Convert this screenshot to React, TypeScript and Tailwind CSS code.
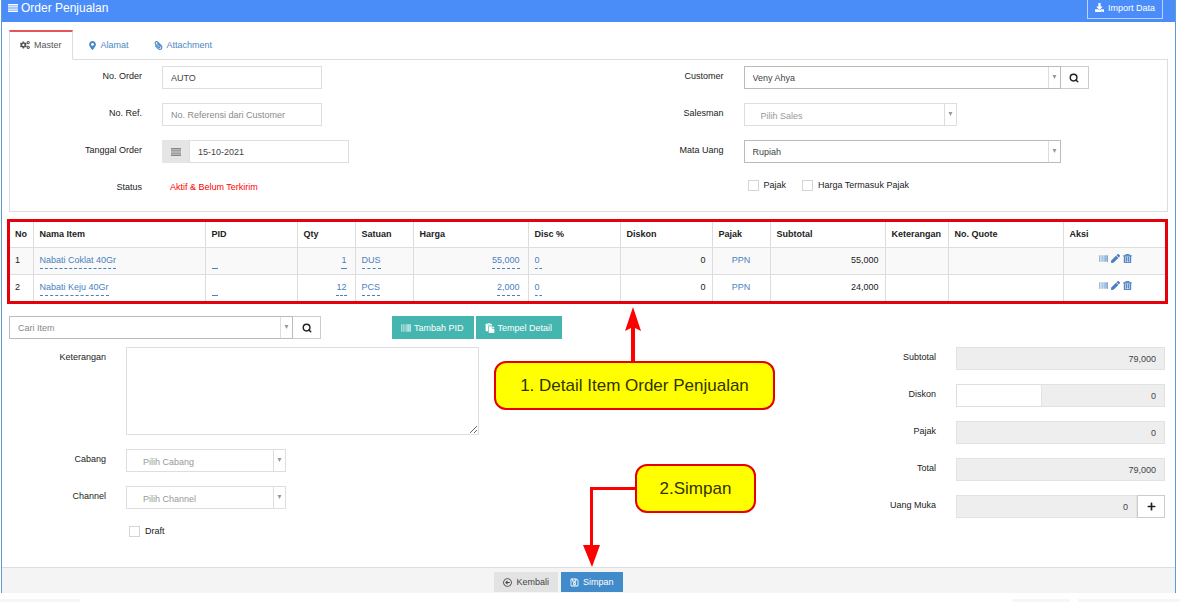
import type { ReactNode } from "react";
import { Search } from "lucide-react";
import {
  FaBarcode,
  FaCogs,
  FaDownload,
  FaMapMarkerAlt,
  FaPaperclip,
  FaPaste,
  FaPen,
  FaPlus,
  FaRegArrowAltCircleLeft,
  FaRegSave,
  FaRegTrashAlt,
} from "react-icons/fa";

const fieldClass = "h-[23px] border border-[#dedede] bg-white px-2 text-[#444] placeholder:text-[#8a8a8a]";
const totalClass = "h-[23px] min-w-0 flex-1 border border-[#e2e2e2] bg-[#eeeeee] px-2 text-right text-[#444]";
const tealButton = "flex h-[23px] items-center gap-[3px] bg-[#45b6af] pr-2.5 pl-[9px] text-white";
const iconButton = "flex h-[23px] w-7 shrink-0 items-center justify-center border border-[#ccc] bg-white text-[#222]";
const editLink = "inline-block border-b border-dashed border-[#4a7fc0] leading-4 text-[#4a7fc0]";
const cell = "border-l border-[#ddd] px-1.5 align-top first:border-l-0";
const bodyCell = `${cell} pt-1`;
const editNumber = "border-l border-[#ddd] pt-1 pr-2 pl-1.5 text-right align-top";

const columns = [
  { name: "No", width: "w-[24px]" },
  { name: "Nama Item", width: "w-[172px]" },
  { name: "PID", width: "w-[92px]" },
  { name: "Qty", width: "w-[58px]" },
  { name: "Satuan", width: "w-[58px]" },
  { name: "Harga", width: "w-[115px]" },
  { name: "Disc %", width: "w-[92px]" },
  { name: "Diskon", width: "w-[92px]" },
  { name: "Pajak", width: "w-[58px]" },
  { name: "Subtotal", width: "w-[115px]" },
  { name: "Keterangan", width: "w-[63px]" },
  { name: "No. Quote", width: "w-[115px]" },
  { name: "Aksi", width: "w-[105px]" },
];

const items = [
  { name: "Nabati Coklat 40Gr", qty: "1", unit: "DUS", price: "55,000", subtotal: "55,000" },
  { name: "Nabati Keju 40Gr", qty: "12", unit: "PCS", price: "2,000", subtotal: "24,000" },
];

function BarsIcon() {
  return (
    <svg viewBox="0 0 10 8" className="h-2 w-2.5 fill-current">
      <path d="M0 0h10v1.4H0zM0 2.2h10v1.4H0zM0 4.4h10v1.4H0zM0 6.6h10V8H0z" />
    </svg>
  );
}

type RowProps = { label: string; id: string; labelClass: string; children: ReactNode };

function Row({ label, id, labelClass, children }: RowProps) {
  return (
    <div className="flex items-start gap-5">
      <label htmlFor={id} className={`${labelClass} shrink-0 text-right leading-5 text-[#222]`}>
        {label}
      </label>
      {children}
    </div>
  );
}

type PickerProps = { id: string; value: string; className: string; tone: string; label?: string };

const filled = "border-[#bbb] pl-2 text-[#444]";
const empty = "border-[#dedede] pl-4 pt-0.5 text-[#999]";

function Picker({ id, value, className, tone, label }: PickerProps) {
  return (
    <div className={`relative ${className}`}>
      <select id={id} aria-label={label} className={`h-[23px] w-full appearance-none border bg-white pr-4 ${tone}`}>
        <option>{value}</option>
      </select>
      <span className="pointer-events-none absolute inset-y-px right-px flex w-3 justify-center border-l border-[#ddd] pt-2">
        <svg viewBox="0 0 5 4" className="h-1 w-[5px] fill-[#999]">
          <path d="M.5 0h4l-2 4z" />
        </svg>
      </span>
    </div>
  );
}

function Check({ label }: { label: string }) {
  return (
    <label className="flex items-center gap-[5px] text-[#222]">
      <input type="checkbox" className="size-[11px] appearance-none border border-[#d5d5d5] bg-white" />
      {label}
    </label>
  );
}

function MasterPanel() {
  return (
    <section className="grid grid-cols-2 border border-[#ddd] pt-1.5 pb-3.5">
      <div className="flex flex-col gap-3.5">
        <Row label="No. Order" id="order" labelClass="w-[132px]">
          <input id="order" defaultValue="AUTO" className={`${fieldClass} w-40`} />
        </Row>
        <Row label="No. Ref." id="ref" labelClass="w-[132px]">
          <input id="ref" placeholder="No. Referensi dari Customer" className={`${fieldClass} w-40`} />
        </Row>
        <Row label="Tanggal Order" id="date" labelClass="w-[132px]">
          <div className="flex">
            <span className="flex w-[27px] items-center justify-center bg-[#e5e5e5] text-[#888]">
              <BarsIcon />
            </span>
            <input id="date" defaultValue="15-10-2021" className={`${fieldClass} w-40`} />
          </div>
        </Row>
        <Row label="Status" id="status" labelClass="w-[132px]">
          <output id="status" className="px-2 leading-5 text-[#f00]">
            Aktif &amp; Belum Terkirim
          </output>
        </Row>
      </div>
      <div className="flex flex-col gap-3.5">
        <Row label="Customer" id="customer" labelClass="w-[135px]">
          <div className="flex">
            <Picker id="customer" value="Veny Ahya" className="w-[317px]" tone={filled} />
            <button type="button" aria-label="Cari customer" className={`${iconButton} border-l-0`}>
              <Search size={10} strokeWidth={3.5} />
            </button>
          </div>
        </Row>
        <Row label="Salesman" id="sales" labelClass="w-[135px]">
          <Picker id="sales" value="Pilih Sales" className="w-[213px]" tone={empty} />
        </Row>
        <Row label="Mata Uang" id="currency" labelClass="w-[135px]">
          <Picker id="currency" value="Rupiah" className="w-[317px]" tone={filled} />
        </Row>
        <div className="flex h-4 gap-4 pl-[159px]">
          <Check label="Pajak" />
          <Check label="Harga Termasuk Pajak" />
        </div>
      </div>
    </section>
  );
}

function ItemTable() {
  return (
    <div className="relative mt-[9px]">
      <table className="w-full table-fixed border-collapse border-t border-[#45b6af] text-left">
        <thead>
          <tr className="h-[26px] border-b border-[#ddd]">
            {columns.map((c) => (
              <th key={c.name} className={`${cell} ${c.width} pt-1 font-bold whitespace-nowrap text-[#222]`}>
                {c.name}
              </th>
            ))}
          </tr>
        </thead>
        <tbody className="text-[#222]">
          {items.map((item, i) => (
            <tr key={item.name} className="h-[27px] border-b border-[#ddd] odd:bg-[#f9f9f9]">
              <td className={bodyCell}>{i + 1}</td>
              <td className={bodyCell}>
                <a href="#item" className={editLink}>{item.name}</a>
              </td>
              <td className={bodyCell}>
                <a href="#pid" aria-label="PID" className={`${editLink} h-[17px] w-1.5`} />
              </td>
              <td className={editNumber}>
                <a href="#qty" className={editLink}>{item.qty}</a>
              </td>
              <td className={bodyCell}>
                <a href="#unit" className={editLink}>{item.unit}</a>
              </td>
              <td className={editNumber}>
                <a href="#price" className={editLink}>{item.price}</a>
              </td>
              <td className={bodyCell}>
                <a href="#disc" className={`${editLink} pr-0.5`}>0</a>
              </td>
              <td className={`${bodyCell} text-right`}>0</td>
              <td className={`${bodyCell} text-center`}>
                <a href="#tax" className="text-[#4a7fc0]">PPN</a>
              </td>
              <td className={`${bodyCell} text-right`}>{item.subtotal}</td>
              <td className={cell} />
              <td className={cell} />
              <td className={bodyCell}>
                <div className="flex justify-center gap-[3px] pt-0.5 text-[9px] text-[#4a7fc0]">
                  <button type="button" aria-label="PID"><FaBarcode /></button>
                  <button type="button" aria-label="Ubah"><FaPen /></button>
                  <button type="button" aria-label="Hapus"><FaRegTrashAlt className="stroke-current" strokeWidth={30} /></button>
                </div>
              </td>
            </tr>
          ))}
        </tbody>
      </table>
      <div className="pointer-events-none absolute -inset-y-0.5 right-0 -left-0.5 border-[3px] border-[#e6000c]" />
    </div>
  );
}

function Totals() {
  return (
    <div className="mr-[3px] flex w-[289px] flex-col gap-3.5">
      <Row label="Subtotal" id="subtotal" labelClass="w-[60px]">
        <input id="subtotal" readOnly value="79,000" className={totalClass} />
      </Row>
      <Row label="Diskon" id="discount" labelClass="w-[60px]">
        <div className="flex min-w-0 flex-1">
          <input id="discount" className={`${fieldClass} w-[85px] border-r-0`} />
          <input aria-label="Nilai diskon" readOnly value="0" className={totalClass} />
        </div>
      </Row>
      <Row label="Pajak" id="tax" labelClass="w-[60px]">
        <input id="tax" readOnly value="0" className={totalClass} />
      </Row>
      <Row label="Total" id="total" labelClass="w-[60px]">
        <input id="total" readOnly value="79,000" className={totalClass} />
      </Row>
      <Row label="Uang Muka" id="deposit" labelClass="w-[60px]">
        <div className="flex min-w-0 flex-1">
          <input id="deposit" readOnly value="0" className={totalClass} />
          <button type="button" aria-label="Tambah uang muka" className={iconButton}>
            <FaPlus />
          </button>
        </div>
      </Row>
    </div>
  );
}

// Tutorial callouts drawn over the form
function Callouts() {
  const box =
    "absolute flex h-[49px] items-center justify-center rounded-xl border-2 border-[#e60000] bg-[#ffff00] text-[17px] text-[#333300]";
  return (
    <div className="pointer-events-none">
      <svg className="absolute top-[306px] left-[624px] h-14 w-[18px] fill-[#f00]" viewBox="0 0 18 56">
        <path d="M9 1l8 24-6-3v34H7V22l-6 3z" />
      </svg>
      <div className={`${box} top-[361px] left-[494px] w-[281px]`}>1. Detail Item Order Penjualan</div>
      <svg className="absolute top-[486px] left-[583px] h-[82px] w-[54px] fill-[#f00]" viewBox="0 0 54 82">
        <path d="M54 1H7v58H0l9 22 8-22h-7V4h44z" />
      </svg>
      <div className={`${box} top-[464px] left-[635px] w-[121px]`}>2.Simpan</div>
    </div>
  );
}

export default function App() {
  return (
    <div className="relative min-h-screen bg-white font-['Liberation_Sans',Arial,sans-serif] text-[9px] leading-4">
      <main className="mr-1 ml-px border-x border-[#5b9bd1]">
        <header className="flex h-[22px] items-start justify-between bg-[#4b8df8] pr-3 pl-1.5 text-white">
          <h1 className="flex items-center gap-[3px] text-xs leading-4">
            <BarsIcon />
            Order Penjualan
          </h1>
          <button type="button" className="flex h-[19px] items-start gap-1 border border-t-0 border-[#b9d3fc] px-[7px]">
            <FaDownload className="mt-[3px]" />
            Import Data
          </button>
        </header>
        <div className="px-[7px] pt-2">
          <nav className="-mb-px flex text-[#4a88c4]">
            <a
              href="#master"
              className="flex h-[30px] items-center gap-1 border border-t-2 border-[#ddd] border-t-[#e5545a] border-b-white bg-white px-2.5 pb-0.5 text-[#555]"
            >
              <FaCogs className="text-[10px]" />
              Master
            </a>
            <a href="#alamat" className="flex items-center gap-1 px-[15px]">
              <FaMapMarkerAlt />
              Alamat
            </a>
            <a href="#attachment" className="flex items-center gap-1 px-2.5">
              <FaPaperclip className="-scale-x-100" />
              Attachment
            </a>
          </nav>
          <MasterPanel />
          <ItemTable />
          <div className="mt-3.5 flex">
            <Picker
              id="search"
              label="Cari Item"
              value="Cari Item"
              className="w-[284px]"
              tone="border-[#bbb] pl-2 text-[#888]"
            />
            <button type="button" aria-label="Cari item" className={`${iconButton} border-l-0`}>
              <Search size={10} strokeWidth={3.5} />
            </button>
            <div className="ml-[71px] flex gap-0.5">
              <button type="button" className={tealButton}>
                <FaBarcode className="text-[10px]" />
                Tambah PID
              </button>
              <button type="button" className={tealButton}>
                <FaPaste className="text-[10px]" />
                Tempel Detail
              </button>
            </div>
          </div>
          <div className="mt-2 flex justify-between pb-7">
            <div className="flex flex-col gap-3.5">
              <Row label="Keterangan" id="note" labelClass="w-[97px]">
                <textarea id="note" className="h-[88px] w-[353px] border border-[#dedede] bg-white p-2" />
              </Row>
              <Row label="Cabang" id="branch" labelClass="w-[97px]">
                <Picker id="branch" value="Pilih Cabang" className="w-40" tone={empty} />
              </Row>
              <Row label="Channel" id="channel" labelClass="w-[97px]">
                <Picker id="channel" value="Pilih Channel" className="w-40" tone={empty} />
              </Row>
              <div className="flex pl-[120px]">
                <Check label="Draft" />
              </div>
            </div>
            <Totals />
          </div>
        </div>
        <footer className="flex h-[26px] items-end justify-center gap-[3px] border-t border-[#ddd] bg-[#f4f4f4] pr-[60px] pb-px">
          <button type="button" className="flex h-5 items-center gap-1 bg-[#e3e3e3] px-[9px] text-[#444]">
            <FaRegArrowAltCircleLeft />
            Kembali
          </button>
          <button type="button" className="flex h-5 items-center gap-1 bg-[#428bca] px-[9px] text-white">
            <FaRegSave />
            Simpan
          </button>
        </footer>
      </main>
      <div className="flex gap-2 pt-1.5">
        <span className="mr-auto h-[3px] w-20 bg-[#f6f6f6]" />
        <span className="h-[3px] w-[58px] bg-[#f6f6f6]" />
        <span className="h-[3px] w-[102px] bg-[#f6f6f6]" />
      </div>
      <Callouts />
    </div>
  );
}
